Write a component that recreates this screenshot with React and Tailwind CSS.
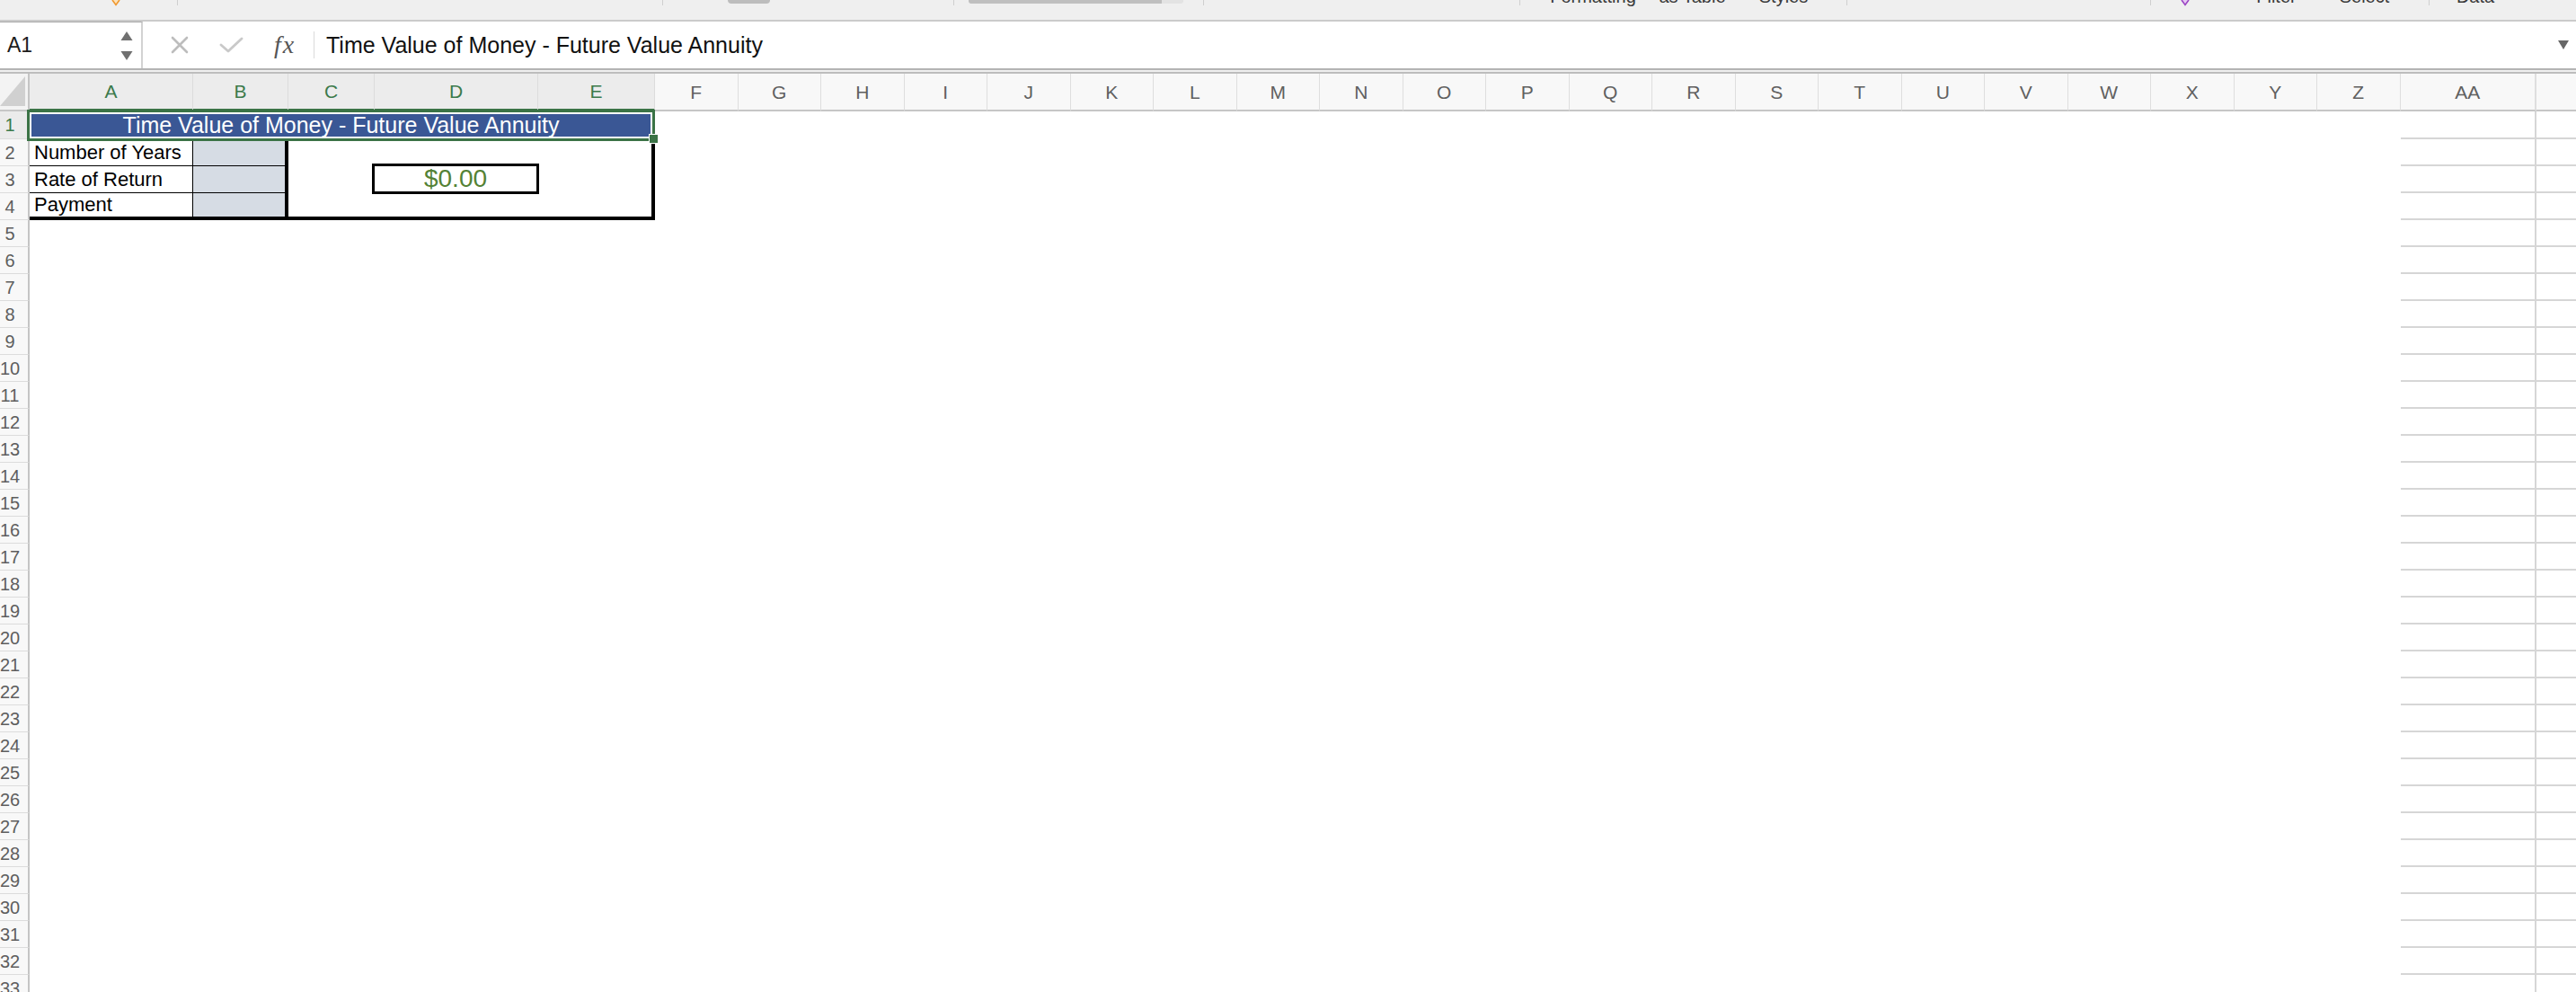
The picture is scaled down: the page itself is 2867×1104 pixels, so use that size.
import React from "react";

const fzCols = ["F","G","H","I","J","K","L","M","N","O","P","Q","R","S","T","U","V","W","X","Y","Z"];
const rowNums = Array.from({ length: 33 }, (_, i) => i + 1);
const restRows = Array.from({ length: 29 }, (_, i) => i + 5);

function Sep() {
  return <div className="w-px h-[6px] bg-[#cfcfcf] shrink-0" />;
}

function Toolbar() {
  return (
    <div className="flex items-start h-[24px] shrink-0 bg-[#efefef] border-b-2 border-[#cbcbcb] overflow-hidden text-[20px] leading-none text-[#3a3a3a]">
      <svg className="ml-[124px] shrink-0" width="10" height="7" viewBox="0 0 10 7">
        <path d="M1 0 L5 5.5 L9 0" fill="#fde2b8" stroke="#f0982e" strokeWidth="1.6" />
      </svg>
      <div className="ml-[63px]"><Sep /></div>
      <div className="ml-[539px]"><Sep /></div>
      <div className="ml-[72px] w-[47px] h-[4px] rounded-b-full bg-[#bdbdbd] shrink-0" />
      <div className="ml-[204px]"><Sep /></div>
      <div className="ml-[16px] flex shrink-0">
        <div className="w-[215px] h-[4px] bg-[#bfbfbf] rounded-bl-[3px]" />
        <div className="w-[24px] h-[4px] bg-[#e3e3e3] rounded-br-[3px]" />
      </div>
      <div className="ml-[22px]"><Sep /></div>
      <div className="ml-[351px]"><Sep /></div>
      <span className="ml-[27px] w-[108px] shrink-0 -mt-[14px] whitespace-nowrap text-center">Formatting</span>
      <span className="ml-[9px] w-[95px] shrink-0 -mt-[14px] whitespace-nowrap text-center">as Table</span>
      <span className="ml-[24px] w-[60px] shrink-0 -mt-[14px] whitespace-nowrap text-center">Styles</span>
      <div className="ml-[40px]"><Sep /></div>
      <div className="ml-[337px]"><Sep /></div>
      <svg className="ml-[33px] shrink-0" width="10" height="7" viewBox="0 0 10 7">
        <path d="M1 0 L5 5.5 L9 0" fill="#e6c8f2" stroke="#9b45c4" strokeWidth="1.6" />
      </svg>
      <span className="ml-[70px] w-[53px] shrink-0 -mt-[14px] whitespace-nowrap text-center">Filter</span>
      <span className="ml-[40px] w-[63px] shrink-0 -mt-[14px] whitespace-nowrap text-center">Select</span>
      <div className="ml-[40px]"><Sep /></div>
      <span className="ml-[15px] w-[72px] shrink-0 -mt-[14px] whitespace-nowrap text-center">Data</span>
    </div>
  );
}

function FormulaBar() {
  return (
    <>
      <div className="flex items-stretch h-[52px] shrink-0 bg-white">
        <div className="w-[159px] shrink-0 flex items-center pl-[8px] pr-[9px] border-r-2 border-[#d2d2d2] border-t border-t-[#a8a8a8]">
          <span className="text-[23px] text-[#1c1c1c] leading-none">A1</span>
          <svg className="ml-auto" width="14" height="34" viewBox="0 0 14 34">
            <path d="M7 1 L13.5 11 L0.5 11 Z" fill="#707070" />
            <path d="M0.5 23 L13.5 23 L7 33 Z" fill="#707070" />
          </svg>
        </div>
        <div className="flex items-center flex-1">
          <svg className="ml-[31px] shrink-0" width="20" height="20" viewBox="0 0 20 20">
            <path d="M2 2 L18 18 M18 2 L2 18" stroke="#bdbdbd" strokeWidth="2.6" strokeLinecap="round" />
          </svg>
          <svg className="ml-[34px] shrink-0" width="27" height="18" viewBox="0 0 27 18">
            <path d="M2 9 L10 16 L25 2" fill="none" stroke="#c9c9c9" strokeWidth="2.8" strokeLinecap="round" strokeLinejoin="round" />
          </svg>
          <span className="ml-[34px] w-[30px] shrink-0 font-['Liberation_Serif',serif] italic text-[28px] tracking-[2px] text-[#555555] leading-none">fx</span>
          <div className="ml-[14px] w-px h-[30px] bg-[#dadada] shrink-0" />
          <span className="ml-[13px] text-[25px] text-[#111111] leading-none whitespace-nowrap">Time Value of Money - Future Value Annuity</span>
          <svg className="ml-auto mr-[8px] shrink-0" width="12" height="10" viewBox="0 0 12 10">
            <path d="M0 0 L12 0 L6 10 Z" fill="#666666" />
          </svg>
        </div>
      </div>
      <div className="h-[6px] shrink-0 bg-[#efefef] border-t-2 border-t-[#b4b4b4] border-b-2 border-b-[#bdbdbd]" />
    </>
  );
}

function HeaderRow() {
  const sel = "shrink-0 h-full flex items-center justify-center bg-[#ececec] border-r border-r-[#dcdcdc] border-b-[3px] border-b-[#3b7346] text-[#3b7a4b]";
  return (
    <div className="flex h-[42px] shrink-0 text-[21px] leading-none">
      <div className="w-[33px] shrink-0 h-full bg-[#f3f3f3] border-r-2 border-r-[#c4c4c4] border-b-2 border-b-[#c6c6c6] flex items-end">
        <svg width="29" height="36" viewBox="0 0 29 36" className="mb-[3px]">
          <path d="M28 2 L28 35 L0 35 Z" fill="#d0d0d0" />
        </svg>
      </div>
      <div className={`w-[182px] ${sel}`}>A</div>
      <div className={`w-[106px] ${sel}`}>B</div>
      <div className={`w-[96px] ${sel}`}>C</div>
      <div className={`w-[182px] ${sel}`}>D</div>
      <div className={`w-[130px] ${sel}`}>E</div>
      {fzCols.map((c) => (
        <div key={c} className="w-[92.5px] shrink-0 h-full flex items-center justify-center bg-[#f8f8f8] border-r border-r-[#dedede] border-b-2 border-b-[#c6c6c6] text-[#606060]">
          {c}
        </div>
      ))}
      <div className="w-[151.5px] shrink-0 h-full flex items-center justify-center bg-[#f8f8f8] border-r-2 border-r-[#dedede] border-b-2 border-b-[#c6c6c6] text-[#606060]">AA</div>
      <div className="flex-1 h-full bg-[#f8f8f8] border-b-2 border-b-[#c6c6c6]" />
    </div>
  );
}

function Tail() {
  return (
    <>
      <div className="w-[151.5px] shrink-0 self-stretch border-b-2 border-r-2 border-[#d6d6d6]" />
      <div className="flex-1 self-stretch border-b-2 border-[#d6d6d6]" />
    </>
  );
}

function RowHeaders() {
  return (
    <div className="w-[33px] shrink-0 flex flex-col text-[20px] leading-none">
      {rowNums.map((n) => (
        <div
          key={n}
          className={
            n === 1
              ? "h-[31px] shrink-0 flex items-center bg-[#ebebeb] border-b border-b-[#dcdcdc] border-r-2 border-r-[#c4c4c4] text-[#3b7a4b]"
              : "h-[30px] shrink-0 flex items-center bg-[#f8f8f8] border-b border-b-[#dcdcdc] border-r-2 border-r-[#c4c4c4] text-[#5e5e5e]"
          }
        >
          <div className="w-[22px] flex justify-center whitespace-nowrap">{n}</div>
        </div>
      ))}
    </div>
  );
}

function LabelRow({ label, last }) {
  return (
    <div className={last ? "flex h-[30px] shrink-0 border-b-4 border-black" : "flex h-[30px] shrink-0 border-b border-black"}>
      <div className="w-[182px] shrink-0 border-r border-black pl-[5px] flex items-center text-[22px] leading-none text-black whitespace-nowrap">
        {label}
      </div>
      <div className="flex-1 bg-[#d6dce4]" />
    </div>
  );
}

function Sheet() {
  return (
    <div className="flex-1 flex flex-col">
      {/* Row 1 */}
      <div className="flex h-[31px] shrink-0">
        <div className="relative w-[696px] shrink-0 h-full pl-[2px] pr-[5px] pt-[3px] pb-[3px] flex">
          <div className="flex-1 bg-[#3a5795] flex items-center justify-center text-white text-[25px] leading-none whitespace-nowrap">
            Time Value of Money - Future Value Annuity
          </div>
          <div className="absolute left-[-3px] top-[-2px] w-[699px] h-[35px] border-[3px] border-[#3b7346] pointer-events-none" />
          <div className="absolute left-[689px] top-[25px] w-[11px] h-[11px] bg-[#3b7346] border border-white" />
        </div>
        <div className="w-[1942.5px] shrink-0" />
        <Tail />
      </div>

      {/* Rows 2-4 */}
      <div className="flex h-[90px] shrink-0">
        <div className="w-[288px] shrink-0 flex flex-col border-r-4 border-black">
          <LabelRow label="Number of Years" />
          <LabelRow label="Rate of Return" />
          <LabelRow label="Payment" last />
        </div>
        <div className="w-[408px] shrink-0 h-full border-r-4 border-b-4 border-black pl-[93px] pt-[27px]">
          <div className="w-[186px] h-[34px] border-[3px] border-black flex items-center justify-center text-[28px] leading-none text-[#548235]">
            $0.00
          </div>
        </div>
        <div className="w-[1942.5px] shrink-0" />
        <div className="flex-1 flex flex-col">
          <div className="flex h-[30px] shrink-0"><Tail /></div>
          <div className="flex h-[30px] shrink-0"><Tail /></div>
          <div className="flex h-[30px] shrink-0"><Tail /></div>
        </div>
      </div>

      {/* Rows 5+ */}
      {restRows.map((r) => (
        <div key={r} className="flex h-[30px] shrink-0">
          <div className="w-[2638.5px] shrink-0" />
          <Tail />
        </div>
      ))}
    </div>
  );
}

export default function App() {
  return (
    <div className="w-[2867px] h-[1104px] overflow-hidden bg-white font-['Liberation_Sans',Arial,sans-serif] flex flex-col">
      <Toolbar />
      <FormulaBar />
      <HeaderRow />
      <div className="flex shrink-0">
        <RowHeaders />
        <Sheet />
      </div>
    </div>
  );
}
